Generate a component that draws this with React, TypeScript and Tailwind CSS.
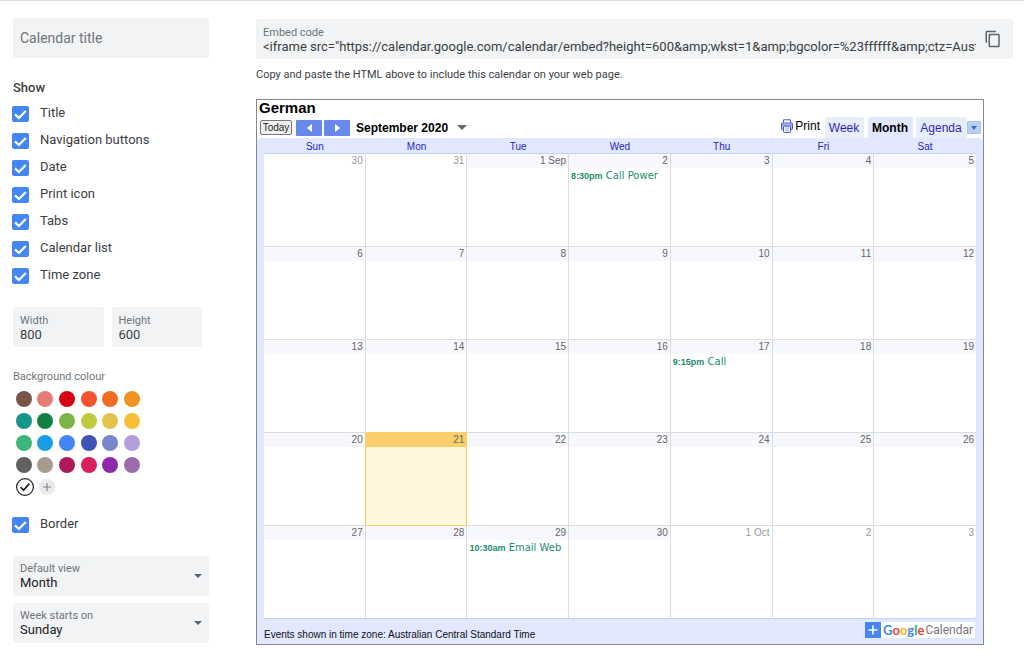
import React from "react";
import { MdContentCopy } from "react-icons/md";

const SHOW_OPTIONS = [
  "Title",
  "Navigation buttons",
  "Date",
  "Print icon",
  "Tabs",
  "Calendar list",
  "Time zone",
];

const COLOURS = [
  { name: "Cocoa", bg: "bg-[#795548]" },
  { name: "Flamingo", bg: "bg-[#e67c73]" },
  { name: "Tomato", bg: "bg-[#d50513]" },
  { name: "Tangerine", bg: "bg-[#f4522d]" },
  { name: "Pumpkin", bg: "bg-[#ef6c20]" },
  { name: "Mango", bg: "bg-[#f09325]" },
  { name: "Eucalyptus", bg: "bg-[#159688]" },
  { name: "Basil", bg: "bg-[#138043]" },
  { name: "Pistachio", bg: "bg-[#7eb34a]" },
  { name: "Avocado", bg: "bg-[#c0ca3f]" },
  { name: "Citron", bg: "bg-[#e4c34c]" },
  { name: "Banana", bg: "bg-[#f6bf3a]" },
  { name: "Sage", bg: "bg-[#3ab57c]" },
  { name: "Peacock", bg: "bg-[#199de4]" },
  { name: "Cobalt", bg: "bg-[#4486f4]" },
  { name: "Blueberry", bg: "bg-[#3f52b5]" },
  { name: "Lavender", bg: "bg-[#7986cb]" },
  { name: "Wisteria", bg: "bg-[#b39ddb]" },
  { name: "Graphite", bg: "bg-[#616161]" },
  { name: "Birch", bg: "bg-[#a79b8e]" },
  { name: "Beetroot", bg: "bg-[#ad1a57]" },
  { name: "Cherry blossom", bg: "bg-[#d81f60]" },
  { name: "Grape", bg: "bg-[#8e29a9]" },
  { name: "Amethyst", bg: "bg-[#9e6aae]" },
];

const WEEKDAYS = ["Sun", "Mon", "Tue", "Wed", "Thu", "Fri", "Sat"];

type Day = {
  label: string;
  outside?: boolean;
  today?: boolean;
  event?: { time: string; title: string };
};

const day = (label: string | number): Day => ({ label: String(label) });
const out = (label: string): Day => ({ label, outside: true });

const WEEKS: Day[][] = [
  [
    out("30"),
    out("31"),
    day("1 Sep"),
    { label: "2", event: { time: "8:30pm", title: "Call Power" } },
    day(3),
    day(4),
    day(5),
  ],
  [6, 7, 8, 9, 10, 11, 12].map(day),
  [
    day(13),
    day(14),
    day(15),
    day(16),
    { label: "17", event: { time: "9:15pm", title: "Call" } },
    day(18),
    day(19),
  ],
  [day(20), { label: "21", today: true }, day(22), day(23), day(24), day(25), day(26)],
  [
    day(27),
    day(28),
    { label: "29", event: { time: "10:30am", title: "Email Web" } },
    day(30),
    out("1 Oct"),
    out("2"),
    out("3"),
  ],
];

function CheckRow({ label }: { label: string }) {
  return (
    <label className="flex h-[27px] items-center gap-[10px] text-[13px] text-[#3c4043]">
      <span className="-ml-px grid h-4 w-[18px] items-center justify-items-start">
        <input
          type="checkbox"
          defaultChecked
          className="peer col-start-1 row-start-1 h-4 w-[17px] appearance-none rounded-[2px] border-2 border-[#5f6368] checked:border-[#4486f4] checked:bg-[#4486f4]"
        />
        <svg
          viewBox="0 0 17 16"
          className="pointer-events-none invisible col-start-1 row-start-1 h-4 w-[17px] peer-checked:visible"
          fill="none"
          stroke="#fff"
          strokeWidth="2.2"
        >
          <path d="M3 8.4 L6.9 12 L13.8 4.9" />
        </svg>
      </span>
      <span className="pb-0.5">{label}</span>
    </label>
  );
}

function SizeField({ id, label, value }: { id: string; label: string; value: string }) {
  return (
    <div className="flex h-10 flex-1 flex-col justify-center rounded-[3px] bg-[#f1f3f4] px-[7px] pt-0.5">
      <label htmlFor={id} className="text-[11px] leading-[14px] text-[#70757a]">
        {label}
      </label>
      <input
        id={id}
        defaultValue={value}
        className="w-full bg-transparent text-[13px] leading-[14px] text-[#3c4043] outline-none"
      />
    </div>
  );
}

function SelectField({ id, label, options }: { id: string; label: string; options: string[] }) {
  return (
    <div className="relative flex h-10 flex-col justify-center rounded-[3px] bg-[#f1f3f4] px-[7px]">
      <label htmlFor={id} className="text-[11px] leading-[14px] text-[#70757a]">
        {label}
      </label>
      <select
        id={id}
        className="w-full appearance-none bg-transparent text-[13px] leading-[14px] text-[#202124] outline-none"
      >
        {options.map((o) => (
          <option key={o}>{o}</option>
        ))}
      </select>
      <svg viewBox="0 0 8 4" className="pointer-events-none absolute top-[18px] right-[7px] h-1 w-2">
        <path d="M0 0H8L4 4Z" fill="#5f6368" />
      </svg>
    </div>
  );
}

function Sidebar() {
  return (
    <aside className="w-[196px] shrink-0">
      <input
        aria-label="Calendar title"
        placeholder="Calendar title"
        className="block h-10 w-full rounded-[3px] bg-[#f1f3f4] px-[7px] text-[14px] text-[#3c4043] outline-none placeholder:text-[#70757a]"
      />
      <h2 className="mt-[21px] text-[13px] leading-[18px] font-medium text-[#3c4043]">Show</h2>
      <div className="mt-[3px]">
        {SHOW_OPTIONS.map((o) => (
          <CheckRow key={o} label={o} />
        ))}
      </div>
      <div className="mt-[18px] mr-[7px] flex gap-2">
        <SizeField id="width" label="Width" value="800" />
        <SizeField id="height" label="Height" value="600" />
      </div>
      <h3 className="mt-[22px] text-[11px] leading-4 text-[#70757a]">Background colour</h3>
      <div className="mt-[3px] grid w-[130px] grid-cols-6">
        {COLOURS.map((c) => (
          <button key={c.name} aria-label={c.name} className="grid h-[22px] place-items-center">
            <span className={`size-4 rounded-full ${c.bg}`} />
          </button>
        ))}
      </div>
      <div className="ml-[3px] flex h-[22px] items-center gap-[5px]">
        <button aria-label="White">
          <svg viewBox="0 0 18 18" className="block size-[18px]" fill="none" stroke="#202124">
            <circle cx="9" cy="9" r="8.4" strokeWidth="1.2" />
            <path d="M4.6 9.2 L7.6 12.2 L13.3 5.6" strokeWidth="1.7" />
          </svg>
        </button>
        <button aria-label="Add custom colour">
          <svg viewBox="0 0 16 16" className="block size-4">
            <circle cx="8" cy="8" r="8" fill="#e8eaed" />
            <path d="M8 4V12M4 8H12" stroke="#80868b" strokeWidth="1.2" />
          </svg>
        </button>
      </div>
      <div className="mt-[13px]">
        <CheckRow label="Border" />
      </div>
      <div className="mt-[18px] flex flex-col gap-[7px]">
        <SelectField id="view" label="Default view" options={["Month", "Week", "Agenda"]} />
        <SelectField id="start" label="Week starts on" options={["Sunday", "Monday", "Saturday"]} />
      </div>
    </aside>
  );
}

function EmbedCode() {
  return (
    <div>
      <div className="flex h-10 items-center rounded-[3px] bg-[#f1f3f4] pr-[11px] pl-[7px]">
        <div className="flex min-w-0 flex-1 flex-col pt-0.5">
          <label htmlFor="embed" className="text-[11px] leading-[14px] text-[#70757a]">
            Embed code
          </label>
          <input
            id="embed"
            readOnly
            value={
              '<iframe src="https://calendar.google.com/calendar/embed?height=600&amp;wkst=1&amp;bgcolor=%23ffffff&amp;ctz=Austral'
            }
            className="w-full bg-transparent text-[13px] leading-[14px] text-[#3c4043] outline-none"
          />
        </div>
        <button aria-label="Copy" className="ml-2 text-[#5f6368]">
          <MdContentCopy className="block size-[18px]" />
        </button>
      </div>
      <p className="mt-2 text-[11px] leading-4 text-[#3c4043]">
        Copy and paste the HTML above to include this calendar on your web page.
      </p>
    </div>
  );
}

function Toolbar() {
  return (
    <div className="flex h-[21px] items-end justify-between pr-[2px] pl-[3px] text-[12px]">
      <div className="flex h-full items-center">
        <button className="h-[15px] w-8 rounded-[2px] border border-[#777] bg-[#f0f0f0] text-center text-[10px] leading-[13px] text-[#222]">
          Today
        </button>
        <button aria-label="Previous" className="ml-1 grid h-4 w-[26px] place-items-center rounded-[1px] bg-[#668ae8]">
          <svg viewBox="0 0 5 8" className="h-2 w-[5px]">
            <path d="M5 0V8L0 4Z" fill="#fff" />
          </svg>
        </button>
        <button aria-label="Next" className="ml-[2px] grid h-4 w-[26px] place-items-center rounded-[1px] bg-[#668ae8]">
          <svg viewBox="0 0 5 8" className="h-2 w-[5px]">
            <path d="M0 0V8L5 4Z" fill="#fff" />
          </svg>
        </button>
        <button className="ml-[6px] flex items-center gap-[9px] font-bold text-black">
          September 2020
          <svg viewBox="0 0 10 5" className="h-[5px] w-[10px]">
            <path d="M0 0H10L5 5Z" fill="#666" />
          </svg>
        </button>
      </div>
      <div className="flex h-full items-end">
        <button className="mr-[5px] flex h-full items-center gap-[2px] pb-[3px] text-black">
          <svg viewBox="0 0 12 14" className="h-[14px] w-3" fill="none" stroke="#4a56d6">
            <path d="M2.5 4V.8H9.5V4" fill="#fff" />
            <rect x=".6" y="4" width="10.8" height="6.5" rx="1.2" fill="#dfe4fb" strokeWidth="1.2" />
            <path d="M1 6H11" strokeWidth=".8" />
            <rect x="2.5" y="7.2" width="7" height="6.2" rx=".6" fill="#fff" />
            <path d="M4 9.2H8M4 11.3H8M5 8V12.6M7 8V12.6" strokeWidth=".6" stroke="#98a2ec" />
          </svg>
          Print
        </button>
        <button className="h-[21px] w-[39px] rounded-t-[3px] bg-[#e8eef7] pr-px text-[#2a1fc4]">Week</button>
        <button className="ml-1 h-[21px] w-[45px] rounded-t-[3px] bg-[#e1e8ff] pr-px font-bold text-black">
          Month
        </button>
        <button className="ml-[3px] h-[21px] w-[51px] rounded-t-[3px] bg-[#e8eef7] pr-px text-[#2a1fc4]">
          Agenda
        </button>
        <button
          aria-label="Calendar list"
          className="mb-1 grid h-[13px] w-[14px] place-items-center rounded-[1px] border border-[#a9c3ea] bg-[#b9d0f2]"
        >
          <svg viewBox="0 0 6 4" className="h-1 w-[6px]">
            <path d="M0 0H6L3 4Z" fill="#2d6cd0" />
          </svg>
        </button>
      </div>
    </div>
  );
}

function DayCell({ d, last }: { d: Day; last: boolean }) {
  const strip = d.today ? "bg-[#f9cf6b]" : d.outside ? "" : "bg-[#f7f8fe]";
  const text = d.outside ? "text-[#999]" : "text-[#666]";
  const edge = d.today
    ? "border-t border-r border-[#f9cf6b] bg-[#fef6da] shadow-[-1px_0_0_#f9cf6b,0_1px_0_#f9cf6b]"
    : last
      ? "border-t border-[#ddd]"
      : "border-t border-r border-[#ddd]";
  return (
    <td className={`h-[93px] p-0 align-top group-first:border-t-[#bfd3fb] ${edge} ${d.today ? "relative" : ""}`}>
      <div className={`h-[14px] pr-[2px] text-right text-[10px] leading-[14px] ${strip} ${text}`}>
        {d.label}
      </div>
      {d.event && (
        <a
          href="#event"
          className="block pl-[2px] font-['DejaVu_Sans',sans-serif] text-[10px] leading-[15px] whitespace-nowrap text-[#1d8a72]"
        >
          <b className="font-['Liberation_Sans',Arial,sans-serif] text-[9px]">{d.event.time}</b>{" "}
          {d.event.title}
        </a>
      )}
    </td>
  );
}

function Calendar() {
  return (
    <section className="mt-4 w-full max-w-[728px] border border-[#888] font-['Liberation_Sans',Arial,sans-serif]">
      <h1 className="h-[17px] pl-[2px] text-[15px] leading-4 font-bold text-black">German</h1>
      <Toolbar />
      <div className="rounded-t-[3px] bg-[#e1e8ff] px-[7px]">
        <table className="w-full table-fixed border-separate border-spacing-0">
          <thead>
            <tr>
              {WEEKDAYS.map((w) => (
                <th key={w} className="h-[15px] p-0 pt-[2px] text-[10px] leading-[13px] font-normal text-[#2a1fc4]">
                  {w}
                </th>
              ))}
            </tr>
          </thead>
          <tbody className="bg-white">
            {WEEKS.map((week, i) => (
              <tr key={i} className="group">
                {week.map((d, j) => (
                  <DayCell key={d.label} d={d} last={j === 6} />
                ))}
              </tr>
            ))}
          </tbody>
        </table>
        <div className="flex h-[26px] items-center justify-between border-t border-[#bfd3fb]">
          <span className="pt-[6px] text-[10px] text-[#111]">
            Events shown in time zone: Australian Central Standard Time
          </span>
          <a href="#google-calendar" className="mr-px mb-1 flex h-4 items-center bg-white pr-[2px]">
            <svg viewBox="0 0 16 16" className="mr-[2px] size-4">
              <path d="M0 0H16V16H0Z" fill="#4486f4" />
              <path d="M8 3.5V12.5M3.5 8H12.5" stroke="#fff" strokeWidth="1.6" />
            </svg>
            <span className="pt-px font-['Lato',sans-serif] text-[13px] leading-4 font-bold">
              <span className="text-[#4486f4]">G</span>
              <span className="text-[#ea4335]">o</span>
              <span className="text-[#fbbc05]">o</span>
              <span className="text-[#4486f4]">g</span>
              <span className="text-[#34a853]">l</span>
              <span className="text-[#ea4335]">e</span>
            </span>
            <span className="ml-px font-['Roboto',sans-serif] text-[12px] leading-4 text-[#757575]">
              Calendar
            </span>
          </a>
        </div>
      </div>
    </section>
  );
}

export default function App() {
  return (
    <div className="min-h-screen border-t border-[#dadce0] bg-white font-['Roboto',sans-serif]">
      <div className="flex gap-[47px] pt-[17px] pr-[11px] pb-5 pl-[13px]">
        <Sidebar />
        <main className="min-w-0 flex-1 pt-px">
          <EmbedCode />
          <Calendar />
        </main>
      </div>
    </div>
  );
}
